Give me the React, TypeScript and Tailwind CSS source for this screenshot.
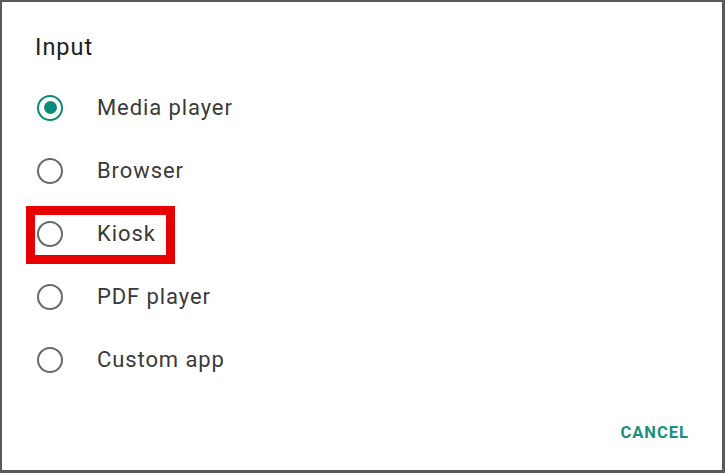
const options = ["Media player", "Browser", "Kiosk", "PDF player", "Custom app"];

const Radio = ({ checked }: { checked: boolean }) => (
  <span
    className={`flex h-[26px] w-[26px] shrink-0 items-center justify-center rounded-full border-[2.5px] ${
      checked ? "border-[#0b8a7a]" : "border-[#696969]"
    }`}
  >
    {checked && <span className="h-[13px] w-[13px] rounded-full bg-[#0b8a7a]" />}
  </span>
);

export default function App() {
  return (
    <div className="h-[473px] w-[725px] overflow-hidden bg-[#5a5a5a] pt-[2px] pl-[2px] pr-[3px] pb-[3px] font-['Roboto',sans-serif]">
      <div className="flex h-full w-full flex-col bg-white">
        <h2 className="pl-[33px] pt-[31px] text-[23.5px] leading-[28px] tracking-[1px] text-[#202020]">Input</h2>
        <ul className="mt-[15px] flex flex-col">
          {options.map((opt, i) => (
            <li key={opt} className="flex h-[63px] items-center pl-[35px]">
              <div className="relative flex items-center">
                {opt === "Kiosk" && (
                  <span className="absolute -left-[11px] top-1/2 h-[58px] w-[149px] -translate-y-[28px] border-[9px] border-[#e60000]" />
                )}
                <Radio checked={i === 0} />
                <span className="ml-[34px] text-[22px] leading-[28px] tracking-[0.9px] text-[#3a3a3a]">{opt}</span>
              </div>
            </li>
          ))}
        </ul>
        <div className="mt-auto flex justify-end pb-[27px] pr-[33px]">
          <button className="text-[16.5px] leading-[20px] font-bold tracking-[1px] text-[#1a8f80]">CANCEL</button>
        </div>
      </div>
    </div>
  );
}
